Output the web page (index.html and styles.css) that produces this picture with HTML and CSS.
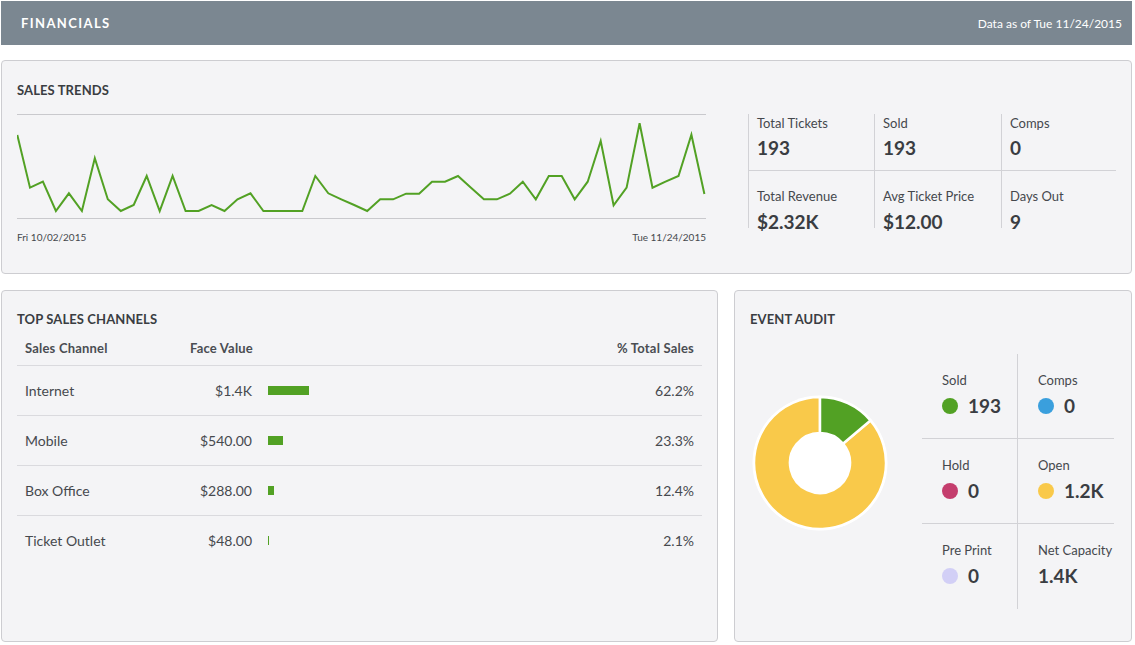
FILE: index.html
```html
<!DOCTYPE html>
<html>
<head>
<meta charset="utf-8">
<link rel="stylesheet" href="styles.css">
</head>
<body>
<div class="page">
  <header class="topbar">
    <h1 class="topbar-title">FINANCIALS</h1>
    <div class="topbar-date">Data as of Tue 11/24/2015</div>
  </header>

  <section class="card trends">
    <h2 class="card-title">SALES TRENDS</h2>
    <div class="trends-body">
      <div class="chart">
        <svg class="chart-svg" width="689" height="105" viewBox="0 0 689 105">
          <line x1="0" y1="0.5" x2="689" y2="0.5" stroke="#c9c9cd" stroke-width="1"/>
          <line x1="0" y1="104.5" x2="689" y2="104.5" stroke="#c9c9cd" stroke-width="1"/>
          <polyline fill="none" stroke="#52a124" stroke-width="2" points="0.3,21 13,73.7 25.9,67.7 38.9,97 51.9,79.3 64.9,97 77.8,44.3 90.8,85.3 103.8,97 116.7,91 129.7,62 142.7,97 155.6,62 168.6,97 181.6,97 194.6,91 207.5,97 220.5,85.3 233.5,79.3 246.4,97 259.4,97 272.4,97 285.3,97 298.3,62 311.3,79.3 324.3,85.3 337.2,91 350.2,97 363.2,85.3 376.1,85.3 389.1,79.7 402.1,79.7 415,67.7 428,67.7 441,62 454,73.7 466.9,85.3 479.9,85.3 492.9,79.7 505.8,67.7 518.8,85.3 531.8,62 544.7,62 557.7,85.3 570.7,67.7 583.7,27 596.6,91.3 609.6,73.7 622.6,9.3 635.5,73.7 648.5,67.7 661.5,62 674.4,20.7 687.4,80"/>
        </svg>
        <div class="chart-dates">
          <span>Fri 10/02/2015</span>
          <span>Tue 11/24/2015</span>
        </div>
      </div>
      <div class="kpis">
        <div class="kpi top"><div class="kpi-label">Total Tickets</div><div class="kpi-value">193</div></div>
        <div class="kpi top"><div class="kpi-label">Sold</div><div class="kpi-value">193</div></div>
        <div class="kpi top"><div class="kpi-label">Comps</div><div class="kpi-value">0</div></div>
        <div class="kpi bottom"><div class="kpi-label">Total Revenue</div><div class="kpi-value">$2.32K</div></div>
        <div class="kpi bottom"><div class="kpi-label">Avg Ticket Price</div><div class="kpi-value">$12.00</div></div>
        <div class="kpi bottom"><div class="kpi-label">Days Out</div><div class="kpi-value">9</div></div>
      </div>
    </div>
  </section>

  <div class="lower">
    <section class="card channels">
      <h2 class="card-title">TOP SALES CHANNELS</h2>
      <div class="table">
        <div class="trow thead">
          <div class="c-name">Sales Channel</div>
          <div class="c-face head">Face Value</div>
          <div class="c-bar"></div>
          <div class="c-pct">% Total Sales</div>
        </div>
        <div class="trow">
          <div class="c-name">Internet</div>
          <div class="c-face">$1.4K</div>
          <div class="c-bar"><span class="bar" style="width:41px"></span></div>
          <div class="c-pct">62.2%</div>
        </div>
        <div class="trow">
          <div class="c-name">Mobile</div>
          <div class="c-face">$540.00</div>
          <div class="c-bar"><span class="bar" style="width:15px"></span></div>
          <div class="c-pct">23.3%</div>
        </div>
        <div class="trow">
          <div class="c-name">Box Office</div>
          <div class="c-face">$288.00</div>
          <div class="c-bar"><span class="bar" style="width:6px"></span></div>
          <div class="c-pct">12.4%</div>
        </div>
        <div class="trow">
          <div class="c-name">Ticket Outlet</div>
          <div class="c-face">$48.00</div>
          <div class="c-bar"><span class="bar" style="width:1px"></span></div>
          <div class="c-pct">2.1%</div>
        </div>
      </div>
    </section>

    <section class="card audit">
      <h2 class="card-title">EVENT AUDIT</h2>
      <div class="audit-body">
        <svg class="donut" width="140" height="140" viewBox="0 0 140 140">
          <circle cx="70" cy="70" r="67.5" fill="#ffffff"/>
          <path d="M120.47,27.47 A66,66 0 1 1 70,4 L70,40 A30,30 0 1 0 92.94,50.67 Z" fill="#f9c94a" stroke="#ffffff" stroke-width="2.5" stroke-linejoin="round"/>
          <path d="M70,4 A66,66 0 0 1 120.47,27.47 L92.94,50.67 A30,30 0 0 0 70,40 Z" fill="#52a124" stroke="#ffffff" stroke-width="2.5" stroke-linejoin="round"/>
        </svg>
        <div class="audit-grid">
          <div class="acell left row-a"><div class="a-label">Sold</div><div class="a-value"><span class="dot dot-sold"></span>193</div></div>
          <div class="acell row-a"><div class="a-label">Comps</div><div class="a-value"><span class="dot dot-comps"></span>0</div></div>
          <div class="acell left row-a"><div class="a-label">Hold</div><div class="a-value"><span class="dot dot-hold"></span>0</div></div>
          <div class="acell row-a"><div class="a-label">Open</div><div class="a-value"><span class="dot dot-open"></span>1.2K</div></div>
          <div class="acell left"><div class="a-label">Pre Print</div><div class="a-value"><span class="dot dot-pre"></span>0</div></div>
          <div class="acell"><div class="a-label">Net Capacity</div><div class="a-value">1.4K</div></div>
        </div>
      </div>
    </section>
  </div>
</div>
</body>
</html>
```

FILE: styles.css
```css
* { box-sizing: border-box; }

html, body {
  margin: 0;
  padding: 0;
  background: #ffffff;
}

body {
  font-family: "Lato", "Open Sans", "Liberation Sans", sans-serif;
  color: #3d4045;
}

.page {
  width: 1135px;
  padding: 1px 3px 0 1px;
}

/* Top bar */
.topbar {
  height: 44px;
  background: #7b8791;
  display: flex;
  align-items: center;
  justify-content: space-between;
  padding: 0 10px 0 20px;
}

.topbar-title {
  margin: 0;
  font-size: 13px;
  font-weight: 700;
  letter-spacing: 1.4px;
  color: #ffffff;
}

.topbar-date {
  font-size: 12px;
  color: #ffffff;
}

/* Cards */
.card {
  background: #f4f4f6;
  border: 1px solid #cdcdd1;
  border-radius: 4px;
  padding: 21px 15px 0 15px;
}

.card-title {
  margin: 0;
  font-size: 13px;
  line-height: 16px;
  font-weight: 700;
  letter-spacing: 0.1px;
  color: #3a3d42;
}

/* Sales trends */
.trends {
  margin-top: 15px;
  height: 214px;
}

.trends-body {
  display: flex;
  align-items: flex-start;
  margin-top: 16px;
}

.chart {
  width: 689px;
}

.chart-svg {
  display: block;
}

.chart-dates {
  display: flex;
  justify-content: space-between;
  margin-top: 11px;
  font-size: 10px;
  line-height: 14px;
  color: #45484d;
}

.kpis {
  margin-left: 42px;
  width: 368px;
  display: grid;
  grid-template-columns: 126px 127px 115px;
  align-content: start;
}

.kpi {
  border-left: 1px solid #d2d2d6;
  padding-left: 8px;
}

.kpi.top {
  height: 57px;
  border-bottom: 1px solid #d2d2d6;
  padding-top: 1px;
}

.kpi.bottom {
  height: 57px;
  padding-top: 17px;
}

.kpi-label {
  font-size: 13px;
  line-height: 16px;
  color: #45484d;
}

.kpi-value {
  margin-top: 5px;
  font-size: 19px;
  line-height: 24px;
  font-weight: 700;
  color: #3a3d42;
  white-space: nowrap;
}

.kpi.bottom .kpi-value {
  margin-top: 6px;
}

/* Lower row */
.lower {
  margin-top: 16px;
  display: grid;
  grid-template-columns: 717px 1fr;
  column-gap: 16px;
}

.channels,
.audit {
  height: 352px;
  padding-top: 20px;
}

/* Table */
.trow {
  display: flex;
  align-items: center;
  height: 50px;
  border-top: 1px solid #dadade;
  font-size: 14px;
  color: #46494e;
}

.trow.thead {
  height: 39px;
  border-top: none;
  border-bottom: 1px solid #dadade;
  align-items: flex-end;
  padding-bottom: 9px;
  font-size: 13px;
  font-weight: 700;
  letter-spacing: 0.2px;
  color: #4a4d52;
}

.thead + .trow {
  border-top: none;
  height: 49px;
}

.c-name {
  width: 173px;
  padding-left: 8px;
}

.c-face {
  width: 62px;
  text-align: right;
  white-space: nowrap;
}

.c-face.head {
  text-align: left;
}

.c-bar {
  flex: 1;
  padding-left: 16px;
  display: flex;
  align-items: center;
}

.bar {
  display: block;
  height: 9px;
  background: #52a124;
}

.c-pct {
  padding-right: 8px;
  text-align: right;
}

/* Event audit */
.audit-body {
  display: flex;
  align-items: flex-start;
  margin-top: 27px;
}

.donut {
  display: block;
  margin-top: 39px;
}

.audit-grid {
  margin-left: 32px;
  width: 192px;
  display: grid;
  grid-template-columns: 96px 96px;
}

.acell {
  height: 85px;
  padding: 18px 0 0 20px;
}

.acell.left {
  border-right: 1px solid #d2d2d6;
}

.acell.row-a {
  border-bottom: 1px solid #d2d2d6;
}

.a-label {
  font-size: 13px;
  line-height: 16px;
  color: #45484d;
  white-space: nowrap;
}

.a-value {
  margin-top: 6px;
  display: flex;
  align-items: center;
  font-size: 19px;
  line-height: 24px;
  font-weight: 700;
  color: #3a3d42;
}

.dot {
  width: 16px;
  height: 16px;
  border-radius: 50%;
  margin-right: 10px;
  flex: none;
}

.dot-sold { background: #52a124; }
.dot-comps { background: #3a9fdd; }
.dot-hold { background: #c43d6d; }
.dot-open { background: #f9c94a; }
.dot-pre { background: #d2cff6; }
```
